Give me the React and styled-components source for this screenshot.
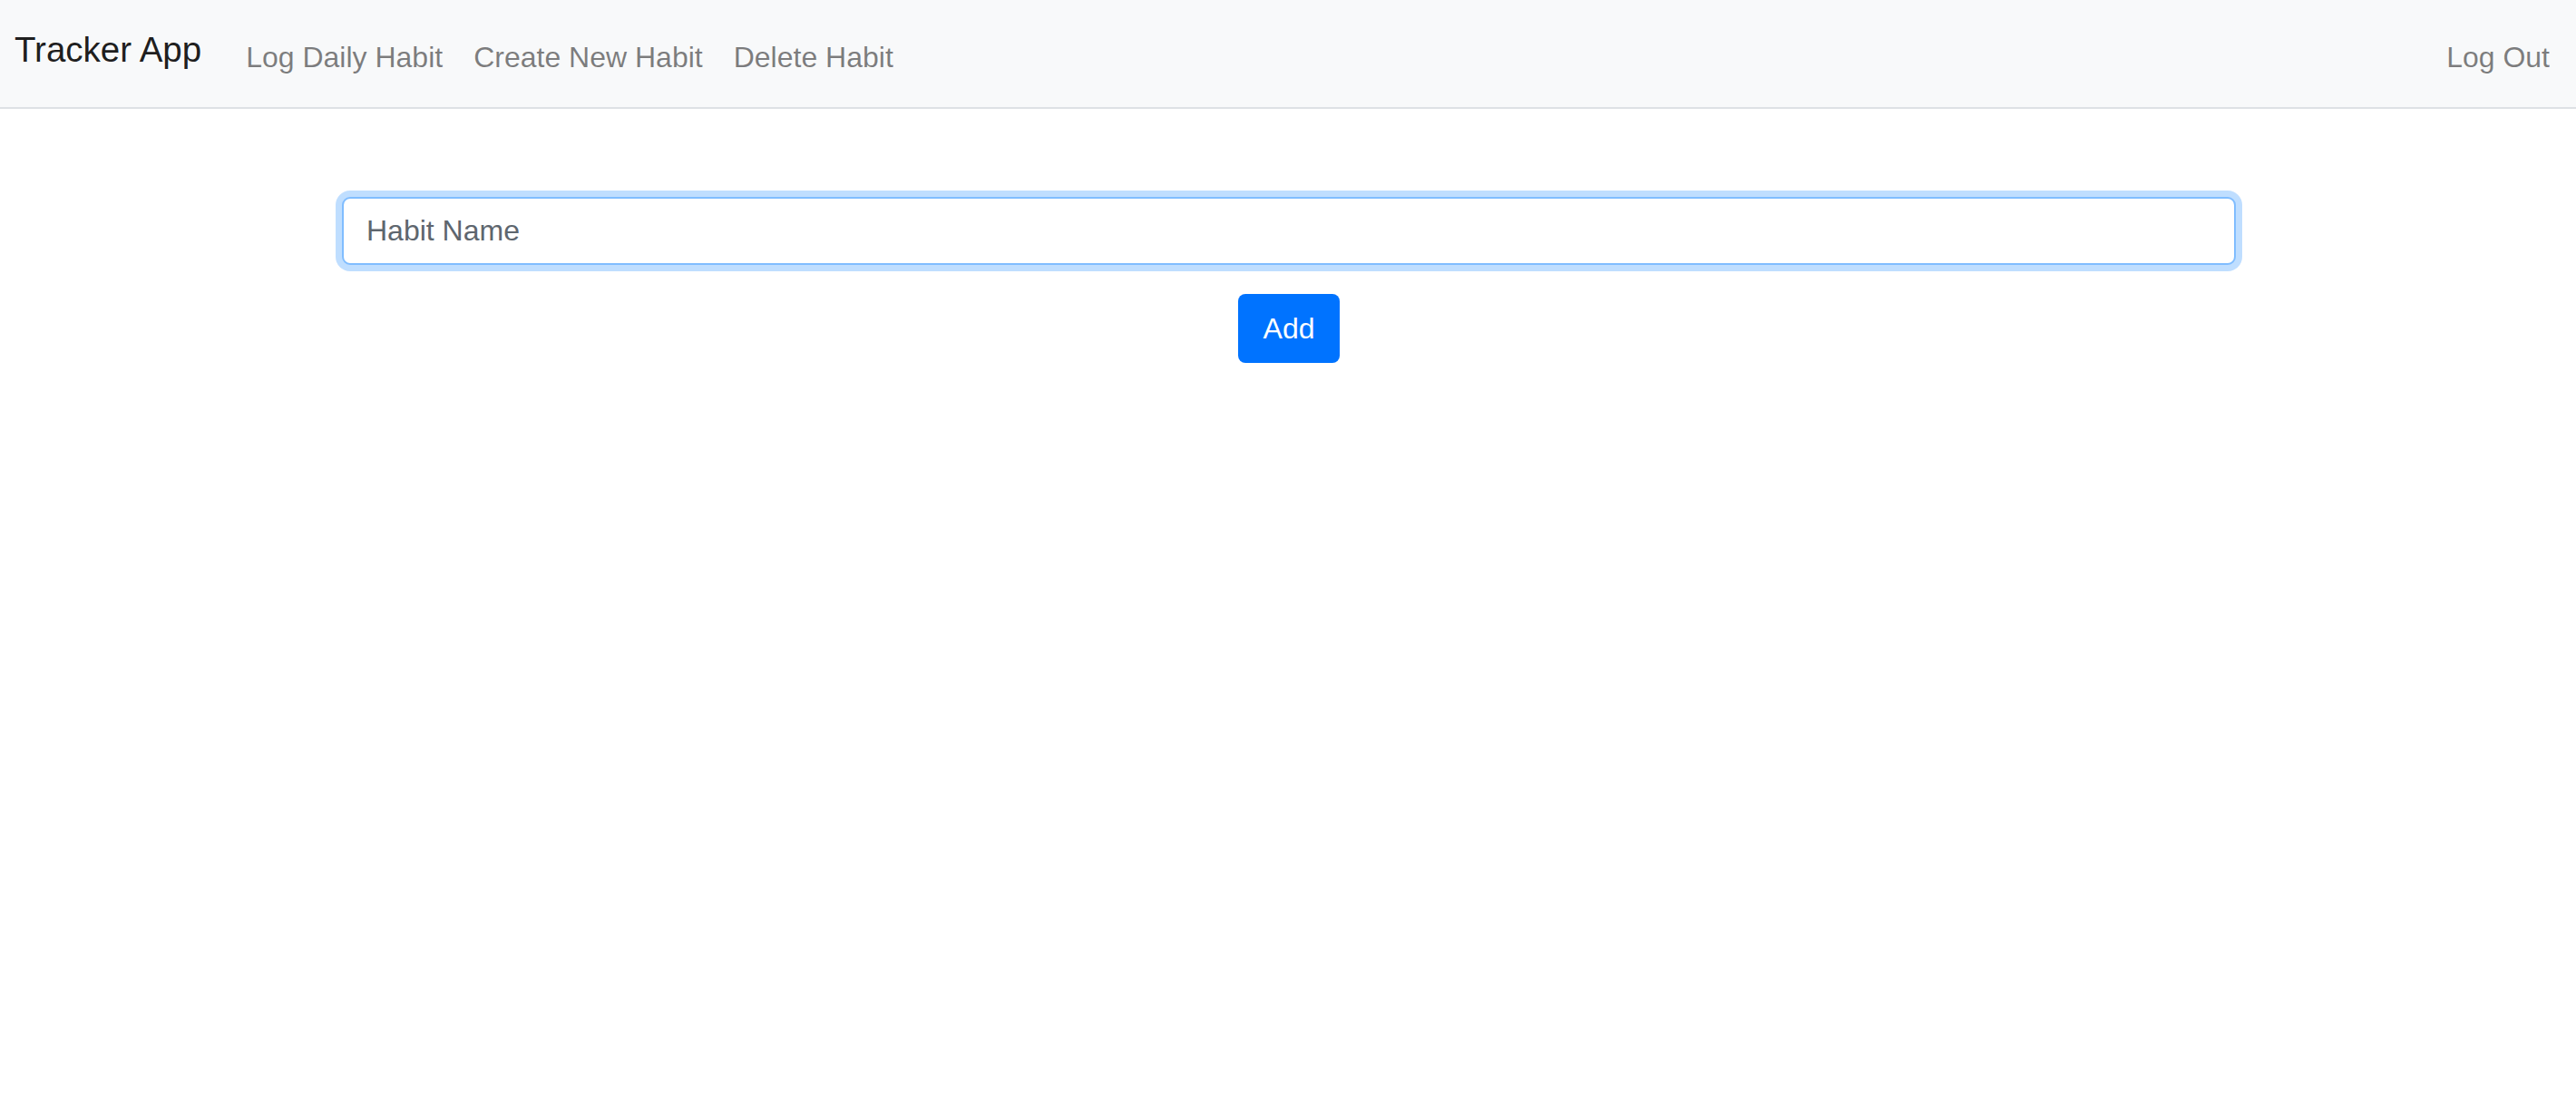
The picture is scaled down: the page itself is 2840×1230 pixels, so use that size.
import React, { useState } from "react";
import styled, { createGlobalStyle } from "styled-components";

const GlobalStyle = createGlobalStyle`
  html, body {
    margin: 0;
    padding: 0;
    background: #ffffff;
    font-family: "Liberation Sans", Arial, sans-serif;
  }
  * { box-sizing: border-box; }
`;

const Navbar = styled.nav`
  display: flex;
  align-items: flex-start;
  height: 120px;
  padding: 0 12px 0 16px;
  background: #f8f9fa;
  border-bottom: 2px solid #dee1e5;
`;

const Brand = styled.a`
  margin-top: 36px;
  margin-right: 32px;
  font-size: 38.5px;
  line-height: 1;
  color: rgba(0, 0, 0, 0.9);
  text-decoration: none;
  white-space: nowrap;
`;

const NavList = styled.div`
  display: flex;
  flex: 1;
`;

const NavLink = styled.a`
  margin-top: 47px;
  padding: 0 17px;
  font-size: 32px;
  line-height: 1;
  color: rgba(0, 0, 0, 0.5);
  text-decoration: none;
  white-space: nowrap;
  cursor: pointer;
  margin-left: ${(p) => (p.$push ? "auto" : "0")};
`;

const Main = styled.main`
  display: flex;
  flex-direction: column;
  align-items: center;
  gap: 32px;
  padding: 97px 0 0 2px;
`;

const HabitInput = styled.input`
  width: 2088px;
  height: 75px;
  padding: 0 25px;
  font-family: "Liberation Sans", Arial, sans-serif;
  font-size: 32px;
  color: #495057;
  background: #fff;
  border: 2px solid #80bdff;
  border-radius: 9px;
  box-shadow: 0 0 0 7px rgba(0, 123, 255, 0.25);
  outline: none;

  &::placeholder {
    color: #5e666e;
    opacity: 1;
  }
`;

const AddButton = styled.button`
  width: 112px;
  height: 76px;
  padding: 0;
  font-family: "Liberation Sans", Arial, sans-serif;
  font-size: 32px;
  color: #fff;
  background: #0073ff;
  border: none;
  border-radius: 8px;
  cursor: pointer;
`;

function App() {
  const [habit, setHabit] = useState("");

  return (
    <>
      <GlobalStyle />
      <Navbar>
        <Brand href="#">Tracker App</Brand>
        <NavList>
          <NavLink>Log Daily Habit</NavLink>
          <NavLink>Create New Habit</NavLink>
          <NavLink>Delete Habit</NavLink>
          <NavLink $push>Log Out</NavLink>
        </NavList>
      </Navbar>
      <Main>
        <HabitInput
          placeholder="Habit Name"
          value={habit}
          onChange={(e) => setHabit(e.target.value)}
        />
        <AddButton onClick={() => setHabit("")}>Add</AddButton>
      </Main>
    </>
  );
}

export default App;
